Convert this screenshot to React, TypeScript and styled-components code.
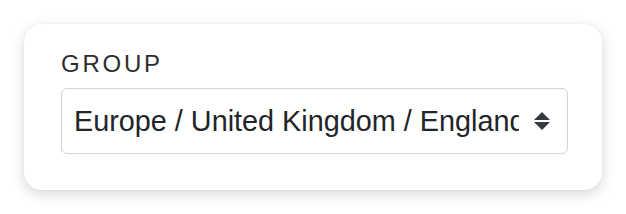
import React from 'react';
import styled, { createGlobalStyle } from 'styled-components';

const GlobalStyle = createGlobalStyle`
  html, body {
    margin: 0;
    padding: 0;
    background: #ffffff;
    font-family: "Liberation Sans", Arial, sans-serif;
  }
`;

const Page = styled.div`
  padding: 24px;
  width: 578px;
`;

const Card = styled.div`
  background: #ffffff;
  border-radius: 18px;
  box-shadow: 0 4px 14px rgba(0, 0, 0, 0.16), 0 0 2px rgba(0, 0, 0, 0.06);
  padding: 26px 34px 36px 37px;
  display: flex;
  flex-direction: column;
  gap: 10px;
`;

const Label = styled.label`
  font-size: 24px;
  line-height: 28px;
  letter-spacing: 2.75px;
  color: #2e2e2e;
  text-transform: uppercase;
`;

const SelectWrap = styled.div`
  position: relative;
`;

const Select = styled.select`
  appearance: none;
  -webkit-appearance: none;
  width: 100%;
  box-sizing: border-box;
  height: 66px;
  margin: 0;
  padding: 11px 48px 11px 12px;
  font-family: "Liberation Sans", Arial, sans-serif;
  font-size: 28.8px;
  line-height: 42px;
  color: #212529;
  background: #ffffff;
  border: 1px solid #ced4da;
  border-radius: 6px;
  outline: none;
`;

const Caret = styled.svg`
  position: absolute;
  right: 18px;
  top: 24px;
  pointer-events: none;
`;

export default function App() {
  return (
    <>
      <GlobalStyle />
      <Page>
        <Card>
          <Label htmlFor="group">Group</Label>
          <SelectWrap>
            <Select id="group" defaultValue="eng">
              <option value="eng">Europe / United Kingdom / England</option>
              <option value="sco">Europe / United Kingdom / Scotland</option>
            </Select>
            <Caret width="16" height="18" viewBox="0 0 16 18">
              <path d="M8 0 L16 8 H0 Z" fill="#343a40" />
              <path d="M0 10 H16 L8 18 Z" fill="#343a40" />
            </Caret>
          </SelectWrap>
        </Card>
      </Page>
    </>
  );
}
